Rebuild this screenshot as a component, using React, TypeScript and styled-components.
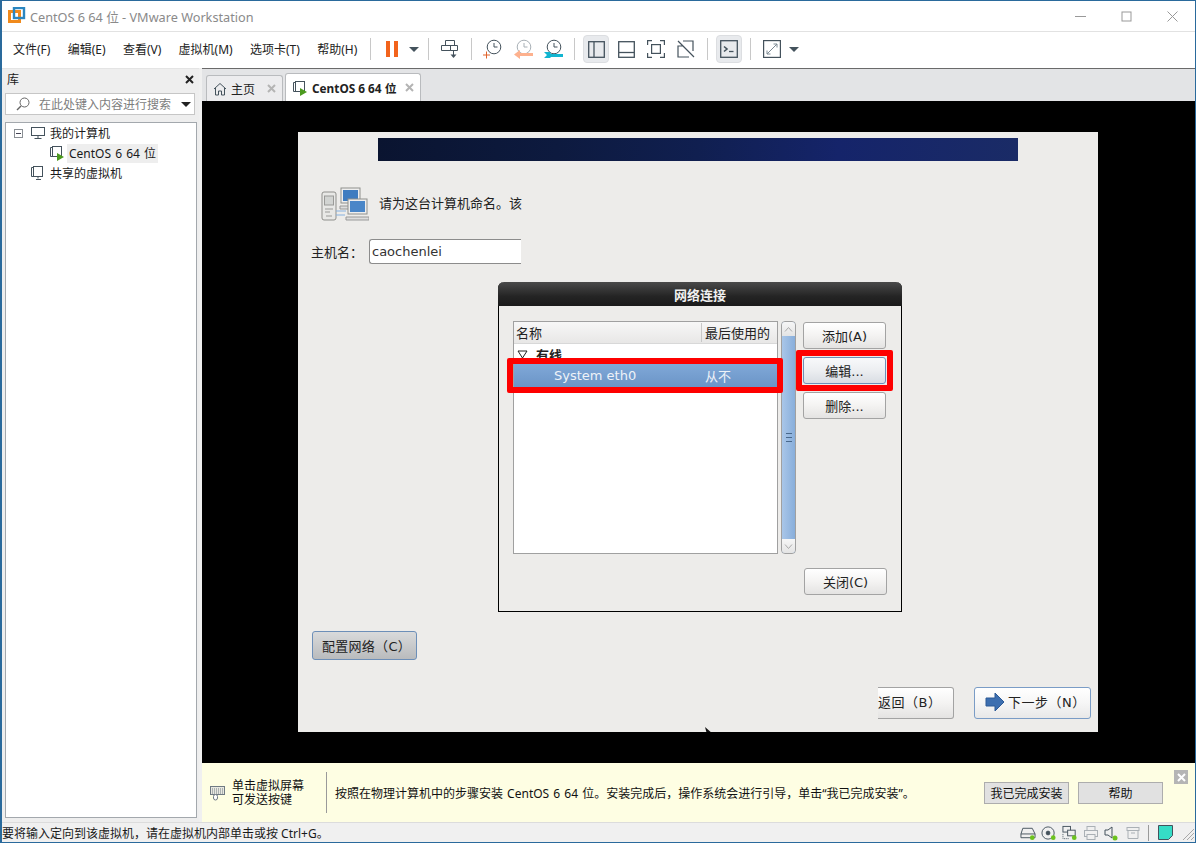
import styled, { createGlobalStyle } from "styled-components";

const GlobalStyle = createGlobalStyle`
    html, body { margin: 0; padding: 0; background: #fff; }
    * { box-sizing: border-box; }
`;

const winFont = `"Noto Sans", "Noto Sans CJK SC", sans-serif`;
const guestFont = `"DejaVu Sans", "Noto Sans CJK SC", sans-serif`;
const ink = "#44525c";

const Win = styled.div`
    width: 1196px; height: 843px;
    display: flex; flex-direction: column;
    border: 1px solid #2a6a9c;
    border-left-width: 2px;
    background: #f0f0f0;
    font-family: ${winFont};
    font-size: 12px;
    color: #1a1a1a;
    overflow: hidden;
`;

const TitleBar = styled.div`
    height: 31px; flex: none;
    display: flex; align-items: center;
    background: #fff;
    border-bottom: 1px solid #e2e2e2;
    padding-left: 6px;
`;

const TitleText = styled.span`
    margin-left: 4px;
    font-size: 12.7px;
    color: #8a8a8a;
    white-space: nowrap;
`;

const WinControls = styled.div`
    margin-left: auto;
    display: flex; align-items: center;
`;

const WinControl = styled.div`
    width: 46px; height: 30px;
    display: flex; align-items: center; justify-content: center;
`;

const Toolbar = styled.div`
    height: 36px; flex: none;
    display: flex; align-items: center;
    background: #fff;
    padding: 0 0 2px 11px;
`;

const Menus = styled.div`
    display: flex; gap: 17.3px;
    width: 351px;
`;

const MenuItem = styled.span`
    font-size: 12px;
    white-space: nowrap;
    color: #222;
`;

const Sep = styled.span`
    width: 1px; height: 22px; flex: none;
    margin: 0 6px;
    background: #c8c8c8;
`;

const Slot = styled.div<{ $active?: boolean }>`
    width: 30px; height: 30px; flex: none;
    display: flex; align-items: center; justify-content: center;
    position: relative;
    &::before {
        content: "";
        display: ${p => (p.$active ? "block" : "none")};
        position: absolute; left: 2px; right: 2px; top: 1px; bottom: 1px;
        background: #e8eaed;
        border: 1px solid #dcdee1;
        border-radius: 4px;
    }
    svg { position: relative; }
`;

const Caret = styled.span`
    width: 0; height: 0; flex: none;
    margin: 0 3px 0 2px;
    border-left: 5px solid transparent;
    border-right: 5px solid transparent;
    border-top: 5px solid #44525c;
`;

const Body = styled.div`
    flex: 1; min-height: 0;
    display: flex;
`;

const Sidebar = styled.div`
    width: 197px; flex: none;
    background: #eeeeee;
    border-top: 1px solid #e4e4e4;
    display: flex; flex-direction: column;
    padding: 0 2px 4px 3px;
`;

const SideHead = styled.div`
    height: 24px; flex: none;
    display: flex; align-items: center; justify-content: space-between;
    padding: 0 3px 4px 2px;
    font-size: 12px;
`;

const SearchBox = styled.div`
    height: 22px; flex: none;
    display: flex; align-items: center;
    margin-right: 2px;
    background: #fff;
    border: 1px solid #c6c6c6;
    padding-left: 10px;
    color: #7d7d7d;
    font-size: 12px;
    gap: 9px;
`;

const SearchCaret = styled(Caret)`
    margin: 0 3px 0 auto;
    border-top-color: #222;
`;

const Tree = styled.div`
    flex: 1;
    margin-top: 7px;
    background: #fff;
    border: 1px solid #a3a8ad;
`;

const TreeRow = styled.div<{ $indent: number }>`
    height: 20px;
    display: flex; align-items: center;
    padding-left: ${p => p.$indent}px;
    font-size: 12px;
    white-space: nowrap;
`;

const Expander = styled.span`
    width: 9px; height: 9px; flex: none;
    border: 1px solid #8a8f94;
    margin-right: 7px;
    display: flex; align-items: center; justify-content: center;
    &::after { content: ""; width: 5px; height: 1px; background: #445; }
`;

const TreeLabel = styled.span<{ $selected?: boolean }>`
    margin-left: 2px;
    height: 19px; line-height: 19px;
    padding: 0 2px;
    word-spacing: 1px;
    background: ${p => (p.$selected ? "#eeeeee" : "transparent")};
`;

const Main = styled.div`
    flex: 1; min-width: 0;
    display: flex; flex-direction: column;
    margin-left: 3px;
    border-top: 1px solid #6a6a6a;
`;

const TabStrip = styled.div`
    height: 32px; flex: none;
    background: #e3e4e6;
    display: flex; align-items: flex-end;
    padding-left: 4px;
    gap: 2px;
`;

const Tab = styled.div<{ $active?: boolean }>`
    height: ${p => (p.$active ? 28 : 26)}px;
    width: ${p => (p.$active ? 136 : 77)}px;
    display: flex; align-items: center;
    padding-left: 6px;
    background: ${p => (p.$active ? "#fff" : "#ececee")};
    border: 1px solid #b9bbbe;
    border-bottom: none;
    border-radius: 3px 3px 0 0;
    font-size: ${p => (p.$active ? 11.8 : 12)}px;
    font-weight: ${p => (p.$active ? 700 : 400)};
    white-space: nowrap;
    color: #222;
`;

const TabLabel = styled.span`
    margin-left: 4px;
`;

const TabClose = styled.span`
    margin-left: auto;
    margin-right: 6px;
    display: flex;
`;

const Viewport = styled.div`
    flex: 1; min-height: 0;
    background: #000;
    padding: 31px 0 0 96px;
    position: relative;
`;

const Guest = styled.div`
    width: 800px; height: 600px;
    background: #edecea;
    position: relative;
    display: flex; flex-direction: column;
    font-family: ${guestFont};
    font-size: 13px;
    color: #222;
    overflow: hidden;
`;

const Banner = styled.div`
    width: 640px; height: 23px; flex: none;
    margin: 6px 0 0 80px;
    background: linear-gradient(95deg, #0a1430 0%, #0d1a3f 28%, #101f50 50%, #15246a 72%, #1a2b66 100%);
`;

const IntroRow = styled.div`
    display: flex; align-items: center;
    margin-top: 25px;
    padding-left: 23px;
    height: 38px;
    font-size: 13px;
`;

const IntroText = styled.span`
    margin: 0 0 6px 10px;
`;

const HostRow = styled.div`
    display: flex; align-items: center;
    margin-top: 15px;
    padding-left: 13px;
    height: 25px;
    font-size: 13px;
`;

const HostLabel = styled.span`
    width: 50px; flex: none;
    padding-bottom: 1px;
    white-space: nowrap;
`;

const HostInput = styled.div`
    width: 152px; height: 25px;
    margin-left: 8px;
    padding-left: 2px;
    display: flex; align-items: center;
    background: #fff;
    border: 1px solid #8c8c8c;
    border-right: none;
    border-radius: 3px 0 0 3px;
    font-size: 13px;
    color: #333;
`;

const GtkButton = styled.div<{ $w: number; $h?: number }>`
    width: ${p => p.$w}px;
    height: ${p => p.$h ?? 27}px;
    flex: none;
    display: flex; align-items: center; justify-content: center;
    border: 1px solid #a3a3a3;
    border-radius: 3px;
    background: linear-gradient(#ffffff, #f4f3f2 50%, #e4e3e2);
    font-size: 13px;
    color: #222;
    white-space: nowrap;
`;

const FocusButton = styled(GtkButton)`
    border-color: #6d8fb8;
    background: linear-gradient(#f8f9fb, #eceef1 50%, #d9dde3);
`;

const ConfigButton = styled(GtkButton)`
    margin: 367px 0 0 14px;
    border-color: #6d8fb8;
    background: linear-gradient(#d9dadb, #b9bbbd);
    letter-spacing: 0.3px;
    padding-left: 4px;
`;

const Nav = styled.div`
    margin-top: auto;
    margin-bottom: 13px;
    display: flex; justify-content: flex-end;
    padding-right: 7px;
    gap: 20px;
`;

const BackButton = styled(GtkButton)`
    border-left: none;
    border-radius: 0 3px 3px 0;
    justify-content: flex-start;
    letter-spacing: 0.5px;
    padding-bottom: 3px;
`;

const NextButton = styled(GtkButton)`
    border-color: #7a9cc6;
    justify-content: flex-start;
    padding: 0 0 3px 10px;
    gap: 3px;
    letter-spacing: 0.5px;
    background: linear-gradient(#fff, #f6f6f6 50%, #e8e8e8);
`;

const Dialog = styled.div`
    position: absolute;
    left: 200px; top: 150px;
    width: 404px; height: 330px;
    display: flex; flex-direction: column;
    border: 1px solid #000;
    border-top: none;
    border-radius: 6px 6px 0 0;
    background: #edecea;
`;

const DialogTitle = styled.div`
    height: 24px; flex: none;
    margin: 0 -1px;
    border-radius: 6px 6px 0 0;
    background: linear-gradient(#4a4a4a, #242424 60%, #1a1a1a);
    color: #f0f0f0;
    font-size: 13px;
    font-weight: 700;
    display: flex; align-items: center; justify-content: center;
`;

const DialogBody = styled.div`
    flex: 1;
    display: grid;
    grid-template-columns: 265px 15px 87px;
    column-gap: 3px;
    grid-template-rows: 233px 1fr;
    padding: 15px 0 0 14px;
`;

const ListBox = styled.div`
    background: #fff;
    border: 1px solid #a0a0a0;
    overflow: hidden;
`;

const ListHead = styled.div`
    height: 22px;
    display: flex; align-items: center;
    background: linear-gradient(#f7f7f7, #e8e7e6);
    border-bottom: 1px solid #d8d8d8;
    font-size: 13px;
`;

const HeadName = styled.span`
    width: 187px;
    padding-left: 2px;
`;

const HeadLast = styled.span`
    flex: 1;
    padding-left: 3px;
    border-left: 1px solid #c8c8c8;
    white-space: nowrap;
    overflow: hidden;
`;

const GroupRow = styled.div`
    height: 20px;
    display: flex; align-items: center;
    padding-left: 3px;
    font-weight: 700;
    font-size: 13px;
    gap: 8px;
`;

const SelectedRow = styled.div`
    height: 24px;
    display: flex; align-items: center;
    padding-bottom: 2px;
    background: linear-gradient(#80a8d8, #6a94c6);
    color: #eef2f8;
    font-size: 13px;
`;

const RowName = styled.span`
    width: 191px;
    padding-left: 40px;
`;

const Scrollbar = styled.div`
    display: flex; flex-direction: column;
    border: 1px solid #a0a0a0;
    border-radius: 4px;
    overflow: hidden;
    background: linear-gradient(90deg, #a9c6e8, #88aedb);
`;

const ScrollEnd = styled.div`
    height: 14px; flex: none;
    background: linear-gradient(#f6f6f6, #e4e4e4);
    display: flex; align-items: center; justify-content: center;
`;

const Grip = styled.div`
    flex: 1;
    display: flex; align-items: center; justify-content: center;
    &::after {
        content: "";
        width: 6px; height: 7px;
        border-top: 1px solid #48688c;
        border-bottom: 1px solid #48688c;
        background: linear-gradient(#48688c, #48688c) center / 100% 1px no-repeat;
    }
`;

const ButtonCol = styled.div`
    display: flex; flex-direction: column;
    align-items: flex-start;
    padding: 1px 0 0 4px;
    gap: 8px;
`;

const CloseRow = styled.div`
    grid-column: 1 / -1;
    display: flex; justify-content: flex-end;
    padding-top: 14px;
    margin-right: -1px;
`;

const RedFrame = styled.div<{ $x: number; $y: number; $w: number; $h: number }>`
    position: absolute;
    left: ${p => p.$x}px; top: ${p => p.$y}px;
    width: ${p => p.$w}px; height: ${p => p.$h}px;
    border: 6px solid #fe0000;
    border-radius: 2px;
`;

const Pointer = styled.svg`
    position: absolute;
    left: 407px; top: 595px;
`;

const HintBar = styled.div`
    height: 59px; flex: none;
    position: relative;
    display: flex; align-items: center;
    background: #fefee3;
    padding-left: 8px;
    font-size: 12px;
    color: #111;
`;

const HintKeys = styled.div`
    margin-left: 7px;
    width: 94px;
    line-height: 14px;
    font-family: "Liberation Sans", "Noto Sans CJK SC", sans-serif;
    font-size: 12px;
`;

const HintSep = styled.span`
    width: 1px; height: 41px; flex: none;
    background: #9a9a9a;
`;

const HintText = styled.div`
    margin-left: 8px;
    width: 649px;
    font-size: 12px;
    word-spacing: 1px;
    white-space: nowrap;
`;

const HintButton = styled.div`
    width: 85px; height: 22px; flex: none;
    margin-right: 9px;
    display: flex; align-items: center; justify-content: center;
    background: #e1e1e1;
    border: 1px solid #adadad;
    font-size: 12px;
`;

const HintClose = styled.div`
    position: absolute;
    right: 7px; top: 7px;
    width: 14px; height: 14px;
    background: #b5b5b5;
    display: flex; align-items: center; justify-content: center;
`;

const StatusBar = styled.div`
    height: 20px; flex: none;
    display: flex; align-items: center;
    background: #f0f0f0;
    border-top: 1px solid #dcdcdc;
    font-size: 12px;
    white-space: nowrap;
`;

const StatusIcons = styled.div`
    margin-left: auto;
    display: flex; align-items: center;
    gap: 5px;
`;

const StatusSep = styled.span`
    width: 1px; height: 16px;
    margin: 0 4px 0 2px;
    background: #9a9a9a;
`;

function Logo() {
    return (
        <svg width="18" height="18" viewBox="0 0 18 18">
            <rect x="1.5" y="4.5" width="10" height="10" fill="none" stroke="#f08a1c" strokeWidth="3" />
            <rect x="6" y="1" width="10" height="10" fill="none" stroke="#2a86c0" strokeWidth="2.4" />
        </svg>
    );
}

function Monitor() {
    return (
        <svg width="16" height="14" viewBox="0 0 16 14" fill="none" stroke={ink}>
            <rect x="1.5" y="1.5" width="13" height="8" />
            <path d="M8 10v2M4.5 12.5h7" />
        </svg>
    );
}

function VmIcon({ play = true }: { play?: boolean }) {
    return (
        <svg width="16" height="16" viewBox="0 0 16 16" fill="none" stroke={ink}>
            <path d="M3.5 11.5h-2v-9h2" />
            <rect x="3.5" y="1.5" width="9" height="10" fill="#fff" />
            {play ? <path d="M8 8l7 4-7 4z" fill="#4b9a1e" stroke="none" /> : <path d="M8 11.5v2M6 14.5h5" />}
        </svg>
    );
}

function Clock({ children, faded }: { children?: React.ReactNode; faded?: boolean }) {
    return (
        <svg width="22" height="22" viewBox="0 0 22 22" fill="none">
            <circle cx="12" cy="9" r="6.8" stroke={faded ? "#a8b0b6" : ink} />
            <path d="M12 5v4h3.5" stroke={faded ? "#a8b0b6" : ink} />
            {children}
        </svg>
    );
}

function SmallClose({ color = "#b4b4b4" }: { color?: string }) {
    return (
        <svg width="9" height="9" viewBox="0 0 9 9">
            <path d="M1 1l7 7M8 1l-7 7" stroke={color} strokeWidth="2" />
        </svg>
    );
}

function NetworkComputers() {
    return (
        <svg width="48" height="36" viewBox="0 0 48 36">
            <rect x="1" y="5" width="14" height="28" rx="2" fill="#e8e8e6" stroke="#8f8f8c" />
            <rect x="3.5" y="9" width="9" height="9" fill="#d2d4d2" stroke="#9a9a98" />
            <path d="M4 22h8M4 25h5M5 29h6" stroke="#9a9a98" />
            <path d="M15 24h10M15 28h9" stroke="#86b1e0" />
            <rect x="20" y="1" width="19" height="15" fill="#eee" stroke="#8f8f8c" />
            <rect x="22" y="3" width="15" height="11" fill="#3f7cc0" />
            <path d="M19 19h15v3H19z" fill="#ddd" stroke="#999" />
            <rect x="27" y="12" width="19" height="15" fill="#eee" stroke="#8f8f8c" />
            <rect x="29" y="14" width="15" height="11" fill="#4a86c8" />
            <path d="M25 30h23v3H25z" fill="#ddd" stroke="#999" />
        </svg>
    );
}

export default function App() {
    return (
        <>
            <GlobalStyle />
            <Win>
                <TitleBar>
                    <Logo />
                    <TitleText>CentOS 6 64 位 - VMware Workstation</TitleText>
                    <WinControls>
                        <WinControl>
                            <svg width="11" height="11" viewBox="0 0 11 11"><path d="M0 5.5h11" stroke="#999" /></svg>
                        </WinControl>
                        <WinControl>
                            <svg width="11" height="11" viewBox="0 0 11 11"><rect x="1" y="1" width="9" height="9" fill="none" stroke="#999" /></svg>
                        </WinControl>
                        <WinControl>
                            <svg width="11" height="11" viewBox="0 0 11 11"><path d="M.5.5l10 10M10.5.5l-10 10" stroke="#999" /></svg>
                        </WinControl>
                    </WinControls>
                </TitleBar>
                <Toolbar>
                    <Menus>
                        <MenuItem>文件(F)</MenuItem>
                        <MenuItem>编辑(E)</MenuItem>
                        <MenuItem>查看(V)</MenuItem>
                        <MenuItem>虚拟机(M)</MenuItem>
                        <MenuItem>选项卡(T)</MenuItem>
                        <MenuItem>帮助(H)</MenuItem>
                    </Menus>
                    <Sep />
                    <Slot>
                        <svg width="14" height="16" viewBox="0 0 14 16">
                            <rect x="1" y="0" width="4" height="16" fill="#f2631c" />
                            <rect x="9" y="0" width="4" height="16" fill="#f2631c" />
                        </svg>
                    </Slot>
                    <Caret />
                    <Sep />
                    <Slot>
                        <svg width="18" height="20" viewBox="0 0 18 20" fill="none" stroke={ink}>
                            <path d="M4.5 1.5h9v5h-9zM.5 6.5h9v5h-9zM9.5 6.5h7v5h-7zM12.5 11.5v6" />
                            <path d="M9.5 15.5h6l-3 3.5z" fill={ink} stroke="none" />
                        </svg>
                    </Slot>
                    <Sep />
                    <Slot>
                        <Clock>
                            <path d="M1 17h7M4.5 13.5v7" stroke="#e0622a" />
                        </Clock>
                    </Slot>
                    <Slot>
                        <Clock faded>
                            <path d="M8 15h13v3H8v3l-6-4.5L8 12z" fill="#fdb18e" />
                        </Clock>
                    </Slot>
                    <Slot>
                        <Clock>
                            <path d="M2 14h6l1 2h12v3H9l-1 1H2l3-3z" fill="#12b5d0" />
                        </Clock>
                    </Slot>
                    <Sep />
                    <Slot $active>
                        <svg width="17" height="17" viewBox="0 0 17 17" fill="none" stroke={ink} strokeWidth="1.3">
                            <rect x=".7" y=".7" width="15.6" height="15.6" />
                            <path d="M6 1v15" />
                        </svg>
                    </Slot>
                    <Slot>
                        <svg width="17" height="17" viewBox="0 0 17 17" fill="none" stroke={ink} strokeWidth="1.3">
                            <rect x=".7" y=".7" width="15.6" height="15.6" />
                            <path d="M1 11.5h15" />
                        </svg>
                    </Slot>
                    <Slot>
                        <svg width="18" height="18" viewBox="0 0 18 18" fill="none" stroke={ink} strokeWidth="1.2">
                            <path d="M.6 5V.6H5M13 .6h4.4V5M17.4 13v4.4H13M5 17.4H.6V13" />
                            <rect x="4.6" y="4.6" width="8.8" height="8.8" />
                        </svg>
                    </Slot>
                    <Slot>
                        <svg width="18" height="18" viewBox="0 0 18 18" fill="none" stroke={ink} strokeWidth="1.2">
                            <path d="M6 1h10v10M12 17H1V6h5M1 1l16 16" />
                        </svg>
                    </Slot>
                    <Sep />
                    <Slot $active>
                        <svg width="18" height="18" viewBox="0 0 18 18" fill="none" stroke={ink} strokeWidth="1.3">
                            <rect x=".7" y=".7" width="16.6" height="16.6" />
                            <path d="M4 6.5l3 2.5-3 2.5" strokeWidth="1.6" />
                            <path d="M9 11.5h4.5" />
                        </svg>
                    </Slot>
                    <Sep />
                    <Slot>
                        <svg width="18" height="18" viewBox="0 0 18 18" fill="none" stroke={ink} strokeWidth="1.2">
                            <rect x=".6" y=".6" width="16.8" height="16.8" />
                            <path d="M4 14l10-10M10.5 4H14v3.5M4 10.5V14h3.5" stroke="#7d8a93" strokeWidth="1" />
                        </svg>
                    </Slot>
                    <Caret />
                </Toolbar>
                <Body>
                    <Sidebar>
                        <SideHead>
                            库
                            <SmallClose color="#222" />
                        </SideHead>
                        <SearchBox>
                            <svg width="14" height="14" viewBox="0 0 14 14" fill="none" stroke="#666">
                                <circle cx="8.5" cy="5.5" r="4.5" />
                                <path d="M5 9l-4 4" strokeWidth="1.4" />
                            </svg>
                            在此处键入内容进行搜索
                            <SearchCaret />
                        </SearchBox>
                        <Tree>
                            <TreeRow $indent={8}>
                                <Expander />
                                <Monitor />
                                <TreeLabel>我的计算机</TreeLabel>
                            </TreeRow>
                            <TreeRow $indent={43}>
                                <VmIcon />
                                <TreeLabel $selected>CentOS 6 64 位</TreeLabel>
                            </TreeRow>
                            <TreeRow $indent={24}>
                                <VmIcon play={false} />
                                <TreeLabel>共享的虚拟机</TreeLabel>
                            </TreeRow>
                        </Tree>
                    </Sidebar>
                    <Main>
                        <TabStrip>
                            <Tab>
                                <svg width="14" height="14" viewBox="0 0 14 14" fill="none" stroke={ink}>
                                    <path d="M1 7l6-5.5L13 7M2.5 6v7h3V9h3v4h3V6" />
                                </svg>
                                <TabLabel>主页</TabLabel>
                                <TabClose><SmallClose /></TabClose>
                            </Tab>
                            <Tab $active>
                                <VmIcon />
                                <TabLabel>CentOS 6 64 位</TabLabel>
                                <TabClose><SmallClose /></TabClose>
                            </Tab>
                        </TabStrip>
                        <Viewport>
                            <Guest>
                                <Banner />
                                <IntroRow>
                                    <NetworkComputers />
                                    <IntroText>请为这台计算机命名。该</IntroText>
                                </IntroRow>
                                <HostRow>
                                    <HostLabel>主机名：</HostLabel>
                                    <HostInput>caochenlei</HostInput>
                                </HostRow>
                                <ConfigButton $w={105} $h={29}>配置网络（C）</ConfigButton>
                                <Nav>
                                    <BackButton $w={76} $h={32}>返回（B）</BackButton>
                                    <NextButton $w={117} $h={32}>
                                        <svg width="20" height="20" viewBox="0 0 20 20">
                                            <path d="M1 6h9V1l9 9-9 9v-5H1z" fill="#3d6fb0" stroke="#2c5a96" />
                                        </svg>
                                        下一步（N）
                                    </NextButton>
                                </Nav>
                                <Dialog>
                                    <DialogTitle>网络连接</DialogTitle>
                                    <DialogBody>
                                        <ListBox>
                                            <ListHead>
                                                <HeadName>名称</HeadName>
                                                <HeadLast>最后使用的</HeadLast>
                                            </ListHead>
                                            <GroupRow>
                                                <svg width="11" height="9" viewBox="0 0 11 9">
                                                    <path d="M1 1h9L5.5 8z" fill="none" stroke="#222" />
                                                </svg>
                                                有线
                                            </GroupRow>
                                            <SelectedRow>
                                                <RowName>System eth0</RowName>
                                                从不
                                            </SelectedRow>
                                        </ListBox>
                                        <Scrollbar>
                                            <ScrollEnd>
                                                <svg width="9" height="5" viewBox="0 0 9 5"><path d="M1 4.5l3.5-4 3.5 4" fill="none" stroke="#aaa" /></svg>
                                            </ScrollEnd>
                                            <Grip />
                                            <ScrollEnd>
                                                <svg width="9" height="5" viewBox="0 0 9 5"><path d="M1 .5l3.5 4 3.5-4" fill="none" stroke="#aaa" /></svg>
                                            </ScrollEnd>
                                        </Scrollbar>
                                        <ButtonCol>
                                            <GtkButton $w={83}>添加(A)</GtkButton>
                                            <FocusButton $w={83}>编辑...</FocusButton>
                                            <GtkButton $w={83}>删除...</GtkButton>
                                        </ButtonCol>
                                        <CloseRow>
                                            <GtkButton $w={83}>关闭(C)</GtkButton>
                                        </CloseRow>
                                    </DialogBody>
                                    <RedFrame $x={8} $y={76} $w={276} $h={35} />
                                    <RedFrame $x={297} $y={68} $w={97} $h={41} />
                                </Dialog>
                                <Pointer width="9" height="11" viewBox="0 0 9 11">
                                    <path d="M0 0l8 7H4l-1 4z" fill="#111" />
                                </Pointer>
                            </Guest>
                        </Viewport>
                        <HintBar>
                            <svg width="15" height="16" viewBox="0 0 15 16" fill="none" stroke="#6f7a82">
                                <rect x=".5" y="1.5" width="14" height="8" fill="#e8e8e0" />
                                <path d="M2 4h11M2 6h11M2 8h11" strokeDasharray="1 1" />
                                <rect x="3.5" y="9.5" width="4" height="5.5" rx="2" fill="#fff" />
                            </svg>
                            <HintKeys>单击虚拟屏幕<br />可发送按键</HintKeys>
                            <HintSep />
                            <HintText>按照在物理计算机中的步骤安装 CentOS 6 64 位。安装完成后，操作系统会进行引导，单击“我已完成安装”。</HintText>
                            <HintButton>我已完成安装</HintButton>
                            <HintButton>帮助</HintButton>
                            <HintClose>
                                <SmallClose color="#fff" />
                            </HintClose>
                        </HintBar>
                    </Main>
                </Body>
                <StatusBar>
                    要将输入定向到该虚拟机，请在虚拟机内部单击或按 Ctrl+G。
                    <StatusIcons>
                        <svg width="16" height="16" viewBox="0 0 17 16" fill="none" stroke={ink}>
                            <path d="M3 3h10l3 6v4H1V9zM1 9h15" />
                            <circle cx="13" cy="13" r="2.5" fill="#6cc21e" stroke="none" />
                        </svg>
                        <svg width="16" height="16" viewBox="0 0 17 16" fill="none" stroke={ink}>
                            <circle cx="7.5" cy="8" r="6.5" />
                            <circle cx="7.5" cy="8" r="2" fill={ink} />
                            <circle cx="13" cy="13" r="2.5" fill="#6cc21e" stroke="none" />
                        </svg>
                        <svg width="16" height="16" viewBox="0 0 17 16" fill="none" stroke={ink}>
                            <rect x="1" y="1" width="8" height="6" />
                            <rect x="6" y="5" width="8" height="6" fill="#f0f0f0" />
                            <path d="M1 9v5h7" strokeDasharray="1 1" />
                            <circle cx="13" cy="13" r="2.5" fill="#6cc21e" stroke="none" />
                        </svg>
                        <svg width="16" height="16" viewBox="0 0 16 16" fill="none" stroke="#aab0b5">
                            <rect x="4" y="1.5" width="8" height="4" />
                            <rect x="1.5" y="5.5" width="13" height="6" />
                            <rect x="4" y="9.5" width="8" height="5" fill="#f0f0f0" />
                        </svg>
                        <svg width="16" height="16" viewBox="0 0 16 16" fill="none" stroke={ink}>
                            <path d="M1 5h3l4-3v11l-4-3H1z" />
                            <circle cx="11" cy="13" r="2.5" fill="#6cc21e" stroke="none" />
                        </svg>
                        <svg width="16" height="16" viewBox="0 0 16 16" fill="none" stroke="#aab0b5">
                            <rect x="2" y="2.5" width="12" height="3" />
                            <path d="M3 5.5v8h10v-8M6 8h4" />
                        </svg>
                        <StatusSep />
                        <svg width="15" height="15" viewBox="0 0 15 15">
                            <path d="M.5.5h14v10l-4 4H.5z" fill="#35dcc6" stroke={ink} />
                        </svg>
                        <svg width="17" height="14" viewBox="0 0 17 14" stroke="#a8a8a8">
                            <path d="M16 3L5 14M16 7l-7 7M16 11l-3 3" />
                        </svg>
                    </StatusIcons>
                </StatusBar>
            </Win>
        </>
    );
}
